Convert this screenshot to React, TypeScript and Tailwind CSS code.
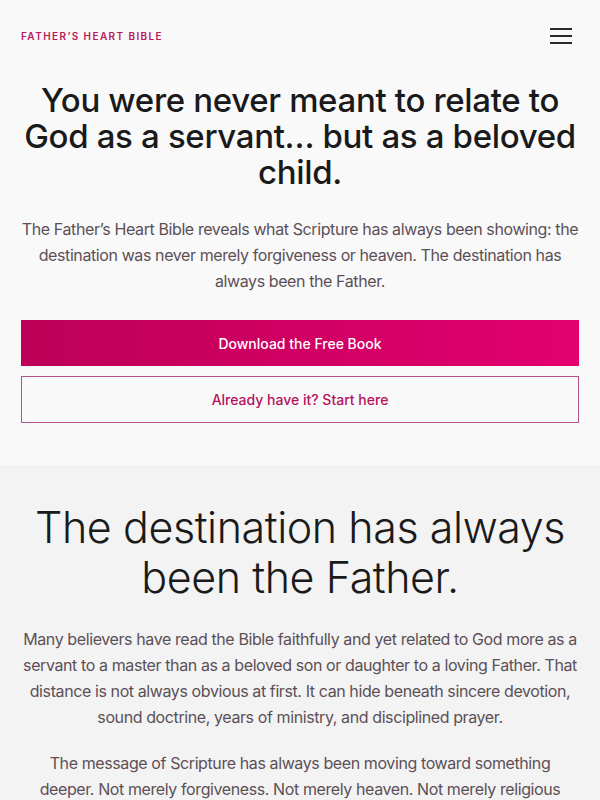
export default function App() {
  return (
    <div className="min-h-screen bg-[#f9f9fa]" style={{ fontFamily: "Inter, 'Noto Sans', sans-serif" }}>
      <header className="flex items-center justify-between px-[21px] h-[72px]">
        <span className="text-[10px] font-semibold tracking-[0.14em] text-[#b9175b]">FATHER’S HEART BIBLE</span>
        <button className="flex flex-col gap-[5px] w-[22px] mr-[7px]">
          <span className="block h-[2px] w-full bg-[#2a2a2a]" />
          <span className="block h-[2px] w-full bg-[#2a2a2a]" />
          <span className="block h-[2px] w-full bg-[#2a2a2a]" />
        </button>
      </header>
      <section className="px-[21px] pt-[10px] pb-[42px] text-center">
        <h1 className="text-[33px] leading-[36px] font-medium text-[#1a1a1a] tracking-[-0.01em]">
          You were never meant to relate to God as a servant… but as a beloved child.
        </h1>
        <p className="mt-[26px] text-[16px] leading-[26px] text-[#5c5057] tracking-[-0.025em]">
          The Father’s Heart Bible reveals what Scripture has always been showing: the destination was never merely forgiveness or heaven. The destination has always been the Father.
        </p>
        <div className="mt-[26px] flex flex-col gap-[10px]">
          <a className="flex h-[46px] items-center justify-center bg-gradient-to-r from-[#bd0058] to-[#e3006f] text-white text-[14px] font-medium">
            Download the Free Book
          </a>
          <a className="flex h-[47px] items-center justify-center border border-[#b4508a] text-[#b3135d] text-[14px] font-medium">
            Already have it? Start here
          </a>
        </div>
      </section>
      <section className="bg-[#f3f3f3] px-[21px] pt-[37px] pb-[40px] text-center">
        <h2 className="text-[43px] leading-[50px] font-light text-[#1a1a1a] tracking-[-0.01em]">
          The destination has always been the Father.
        </h2>
        <p className="mt-[24px] text-[16px] leading-[26px] text-[#5c5057] tracking-[-0.025em]">
          Many believers have read the Bible faithfully and yet related to God more as a servant to a master than as a beloved son or daughter to a loving Father. That distance is not always obvious at first. It can hide beneath sincere devotion, sound doctrine, years of ministry, and disciplined prayer.
        </p>
        <p className="mt-[20px] text-[16px] leading-[26px] text-[#5c5057] tracking-[-0.025em]">
          The message of Scripture has always been moving toward something deeper. Not merely forgiveness. Not merely heaven. Not merely religious duty. The destination has always been the Father.
        </p>
      </section>
    </div>
  );
}
